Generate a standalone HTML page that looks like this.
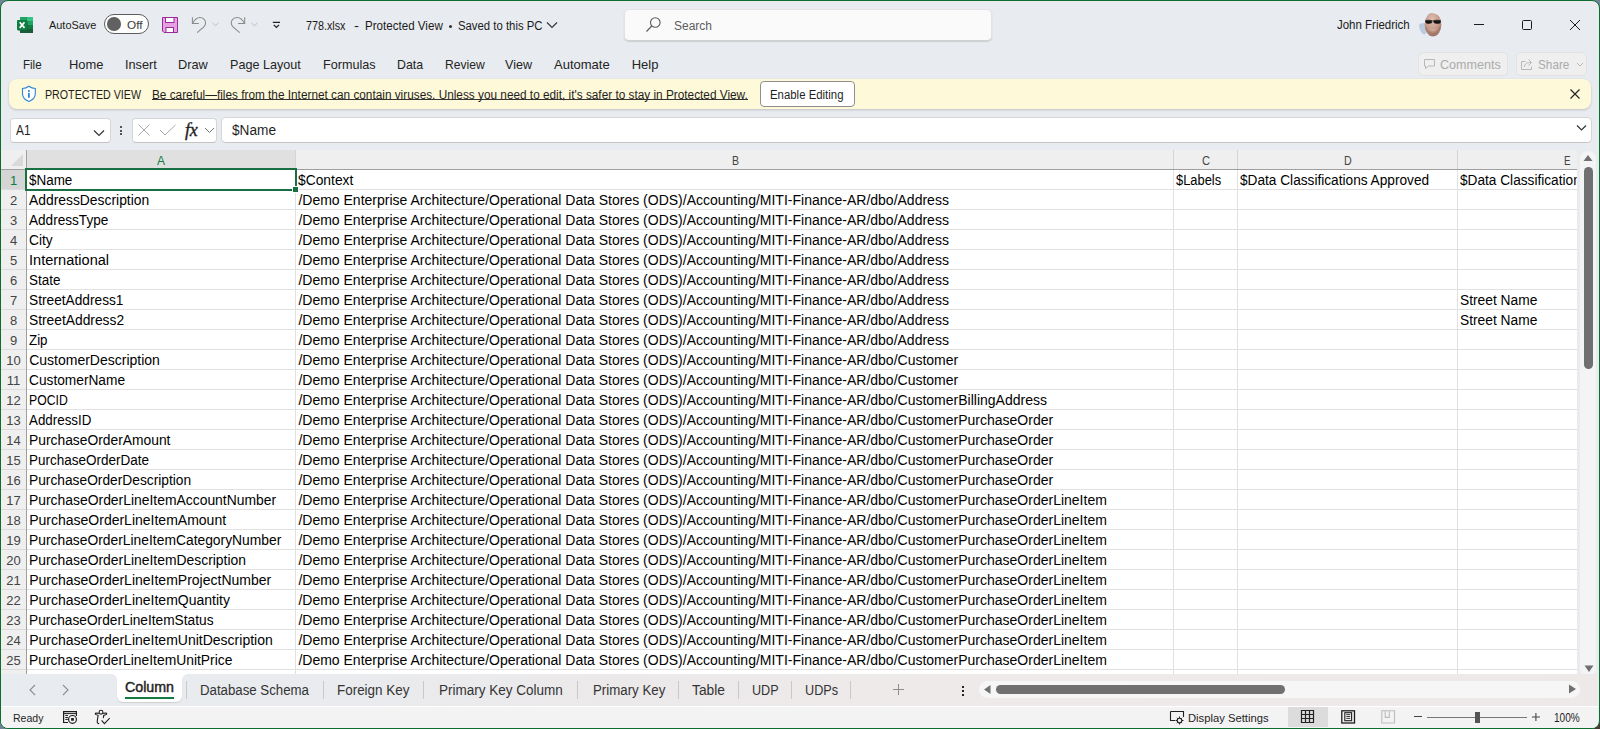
<!DOCTYPE html>
<html><head><meta charset="utf-8"><style>
html,body{margin:0;padding:0;}
body{width:1600px;height:729px;overflow:hidden;position:relative;background:#6f8296;font-family:"Liberation Sans",sans-serif;}
#win{position:absolute;left:0;top:0;width:1598px;height:727px;border:1px solid #0b6e2f;border-radius:8px;background:#e8ebef;overflow:hidden;}
#in{position:absolute;left:-1px;top:-1px;width:1600px;height:729px;}
.t{position:absolute;white-space:nowrap;line-height:1;font-family:"Liberation Sans",sans-serif;}
.c{position:absolute;white-space:nowrap;font-size:14px;line-height:14px;color:#000;}
.rn{position:absolute;left:1px;width:25px;text-align:center;font-size:13px;line-height:13px;}
svg{overflow:visible}
</style></head><body><div style="position:absolute;left:1588px;top:717px;width:12px;height:12px;background:#4a3833"></div><div id="win"><div id="in">
<svg style="position:absolute;left:17px;top:17px;" width="16" height="16" viewBox="0 0 16 16">
<rect x="3" y="0" width="13" height="16" rx="0.8" fill="#185c37"/>
<rect x="3" y="0" width="6.7" height="4" fill="#21a366"/>
<rect x="9.7" y="0" width="6.3" height="4" fill="#33c481"/>
<rect x="3" y="4" width="13" height="4" fill="#21a366"/>
<rect x="3" y="8" width="13" height="4" fill="#107c41"/>
<rect x="3" y="12" width="13" height="4" rx="0.6" fill="#185c37"/>
<rect x="1" y="4" width="10" height="10" rx="1" fill="#0b5a2e" opacity="0.5"/>
<rect x="0" y="3" width="10.3" height="10.2" rx="1" fill="#107c41"/>
<path d="M2.7 5.3 L7.5 10.9 M7.5 5.3 L2.7 10.9" stroke="#fff" stroke-width="1.7"/>
</svg>
<div class="t" style="left:49.00px;top:20px;font-size:11px;color:#1b1b1b;transform:scaleX(0.9919);transform-origin:0 0;">AutoSave</div>
<div style="position:absolute;left:104px;top:14px;width:43px;height:18px;border:1px solid #5c5c5c;border-radius:10px;background:#fdfdfd;"></div>
<div style="position:absolute;left:107px;top:17px;width:13.5px;height:13.5px;border-radius:50%;background:#616161;"></div>
<div class="t" style="left:127.00px;top:20px;font-size:11px;color:#3a3a3a;transform:scaleX(1.0675);transform-origin:0 0;">Off</div>
<svg style="position:absolute;left:162px;top:17px;" width="16" height="16" viewBox="0 0 16 16">
<path d="M0.5 0.5 H15.5 V15.5 H2 L0.5 14 Z" fill="#e6a1e0" stroke="#9b2a9b" stroke-width="1"/>
<rect x="3.5" y="0.5" width="8.5" height="5" fill="#fff" stroke="#9b2a9b" stroke-width="1"/>
<rect x="4" y="10.5" width="7.5" height="5" fill="#fff" stroke="#9b2a9b" stroke-width="1"/>
</svg>
<svg style="position:absolute;left:190px;top:16px;" width="30" height="18" viewBox="0 0 30 18">
<path d="M2.4 1.3 V7.4 H8.8" fill="none" stroke="#8a8a8a" stroke-width="1.05"/>
<path d="M2.7 7.2 C4.8 3 7.4 1.4 10 1.4 C13.2 1.4 15.6 3.9 15.6 6.9 C15.6 8.7 14.8 9.8 13.8 10.8 L7.2 16.6" fill="none" stroke="#8a8a8a" stroke-width="1.05"/>
<path d="M22.5 6.9 L25.5 9.7 L28.4 6.9" fill="none" stroke="#b8b8b8" stroke-width="0.9"/>
</svg>
<svg style="position:absolute;left:229px;top:16px;" width="30" height="18" viewBox="0 0 30 18">
<path d="M15.7 1.3 V7.4 H9.1" fill="none" stroke="#8a8a8a" stroke-width="1.05"/>
<path d="M15.4 7.2 C13.3 3 10.7 1.4 8.1 1.4 C4.9 1.4 2.2 3.9 2.2 6.9 C2.2 8.7 3 9.8 4 10.8 L10.7 16.6" fill="none" stroke="#8a8a8a" stroke-width="1.05"/>
<path d="M22.6 6.9 L25.5 9.7 L28.5 6.9" fill="none" stroke="#b8b8b8" stroke-width="0.9"/>
</svg>
<svg style="position:absolute;left:271px;top:20px;" width="11" height="10" viewBox="0 0 11 10">
<path d="M1.8 2.3 H9" stroke="#222" stroke-width="1.3"/>
<path d="M2.8 4.9 L5.4 7.4 L8 4.9" fill="none" stroke="#222" stroke-width="1.3"/>
</svg>
<div class="t" style="left:306.40px;top:20px;font-size:12px;color:#1b1b1b;transform:scaleX(0.8969);transform-origin:0 0;">778.xlsx</div>
<div class="t" style="left:354.00px;top:20px;font-size:12px;color:#1b1b1b;transform:scaleX(1.2438);transform-origin:0 0;">-</div>
<div class="t" style="left:364.70px;top:20px;font-size:12px;color:#1b1b1b;transform:scaleX(0.9662);transform-origin:0 0;">Protected View</div>
<div style="position:absolute;left:449px;top:25px;width:3px;height:3px;border-radius:50%;background:#333;"></div>
<div class="t" style="left:458.00px;top:20px;font-size:12px;color:#1b1b1b;transform:scaleX(0.9452);transform-origin:0 0;">Saved to this PC</div>
<svg style="position:absolute;left:546px;top:21px;" width="12" height="8" viewBox="0 0 12 8"><path d="M1 1.5 L6 6.5 L11 1.5" fill="none" stroke="#333" stroke-width="1.1"/></svg>
<div style="position:absolute;left:624px;top:9px;width:366px;height:30px;background:#fafafa;border:1px solid #e2e2e2;border-bottom-color:#d0d0d0;border-radius:5px;box-shadow:0 1px 1.5px rgba(0,0,0,0.13);"></div>
<svg style="position:absolute;left:645px;top:16px;" width="17" height="17" viewBox="0 0 17 17"><circle cx="10.3" cy="6.5" r="4.8" fill="none" stroke="#5a5a5a" stroke-width="1.1"/><path d="M6.8 10 L1.5 15.5" stroke="#5a5a5a" stroke-width="1.1"/></svg>
<div class="t" style="left:674.00px;top:20px;font-size:12px;color:#5d5d5d;">Search</div>
<div class="t" style="left:1337.00px;top:19px;font-size:12px;color:#1b1b1b;transform:scaleX(0.9563);transform-origin:0 0;">John Friedrich</div>
<svg style="position:absolute;left:1419px;top:13px;" width="24" height="24" viewBox="0 0 24 24">
<defs><clipPath id="av"><circle cx="12" cy="12" r="12"/></clipPath>
<radialGradient id="fg" cx="0.45" cy="0.3" r="0.75"><stop offset="0" stop-color="#e0c0b2"/><stop offset="0.6" stop-color="#c39886"/><stop offset="1" stop-color="#93695a"/></radialGradient></defs>
<g clip-path="url(#av)">
<rect width="24" height="24" fill="#e6edf4"/>
<ellipse cx="3.5" cy="16" rx="5" ry="6" fill="#b9cbe0"/>
<ellipse cx="14" cy="11.5" rx="8.4" ry="12" fill="url(#fg)"/>
<path d="M6.5 7.6 Q9.5 6.8 12.6 7.5 L12.8 9.8 Q10 11 7 9.9 Z M14.8 7.5 Q18 6.8 21.5 7.6 L21.2 9.9 Q18 11 15 9.8 Z M12.4 8 H15" fill="#161616" stroke="#161616" stroke-width="0.6"/>
<path d="M10 16.3 Q14 18.2 18 16.2 Q14 17.4 10 16.3 Z" fill="#f0e0d6"/>
<path d="M7 14 Q8 19 14 21 Q20 19 21 14" fill="none" stroke="#8a6050" stroke-width="0.8" opacity="0.6"/>
</g></svg>
<svg style="position:absolute;left:1473px;top:18px;" width="12" height="12" viewBox="0 0 12 12"><path d="M1 6.5 H11" stroke="#1b1b1b" stroke-width="1"/></svg>
<svg style="position:absolute;left:1521px;top:19px;" width="12" height="12" viewBox="0 0 12 12"><rect x="1.5" y="1.5" width="9" height="9" rx="1" fill="none" stroke="#1b1b1b" stroke-width="1"/></svg>
<svg style="position:absolute;left:1569px;top:19px;" width="12" height="12" viewBox="0 0 12 12"><path d="M1 1 L11 11 M11 1 L1 11" stroke="#1b1b1b" stroke-width="1"/></svg>
<div class="t" style="left:23.00px;top:58px;font-size:13px;color:#242424;transform:scaleX(0.8887);transform-origin:0 0;">File</div>
<div class="t" style="left:69.00px;top:58px;font-size:13px;color:#242424;transform:scaleX(0.9939);transform-origin:0 0;">Home</div>
<div class="t" style="left:125.00px;top:58px;font-size:13px;color:#242424;transform:scaleX(0.9785);transform-origin:0 0;">Insert</div>
<div class="t" style="left:178.00px;top:58px;font-size:13px;color:#242424;transform:scaleX(0.9817);transform-origin:0 0;">Draw</div>
<div class="t" style="left:230.00px;top:58px;font-size:13px;color:#242424;transform:scaleX(0.9686);transform-origin:0 0;">Page Layout</div>
<div class="t" style="left:323.00px;top:58px;font-size:13px;color:#242424;transform:scaleX(0.9721);transform-origin:0 0;">Formulas</div>
<div class="t" style="left:397.40px;top:58px;font-size:13px;color:#242424;transform:scaleX(0.9493);transform-origin:0 0;">Data</div>
<div class="t" style="left:445.00px;top:58px;font-size:13px;color:#242424;transform:scaleX(0.9311);transform-origin:0 0;">Review</div>
<div class="t" style="left:505.00px;top:58px;font-size:13px;color:#242424;transform:scaleX(0.9660);transform-origin:0 0;">View</div>
<div class="t" style="left:554.00px;top:58px;font-size:13px;color:#242424;">Automate</div>
<div class="t" style="left:631.70px;top:58px;font-size:13px;color:#242424;">Help</div>
<div style="position:absolute;left:1418px;top:52px;width:88px;height:22px;border:1px solid #e2e2e2;border-radius:5px;background:#efefef;"></div>
<svg style="position:absolute;left:1423px;top:58px;" width="13" height="12" viewBox="0 0 13 12"><path d="M1.5 1.5 H11.5 V8 H5.5 L2.5 10.5 V8 H1.5 Z" fill="none" stroke="#b8b8b8" stroke-width="1"/></svg>
<div class="t" style="left:1439.70px;top:58px;font-size:13px;color:#ababab;transform:scaleX(0.9673);transform-origin:0 0;">Comments</div>
<div style="position:absolute;left:1516px;top:52px;width:69px;height:22px;border:1px solid #e2e2e2;border-radius:5px;background:#efefef;"></div>
<svg style="position:absolute;left:1520px;top:57px;" width="14" height="14" viewBox="0 0 14 14"><path d="M5.5 4.5 H1.5 V12.5 H11.5 V9.5" fill="none" stroke="#b8b8b8" stroke-width="1"/><path d="M4.5 10 C4.5 6.5 7 5.5 11 5.5 M8.5 2.5 L11.5 5.5 L8.5 8.5" fill="none" stroke="#b8b8b8" stroke-width="1"/></svg>
<div class="t" style="left:1537.70px;top:58px;font-size:13px;color:#ababab;transform:scaleX(0.9046);transform-origin:0 0;">Share</div>
<svg style="position:absolute;left:1576px;top:62px;" width="8" height="6" viewBox="0 0 8 6"><path d="M1 1 L4 4 L7 1" fill="none" stroke="#b8b8b8" stroke-width="1"/></svg>
<div style="position:absolute;left:9px;top:79px;width:1582px;height:30px;background:#fef9d8;border-radius:8px;box-shadow:0 1px 2.5px rgba(0,0,0,0.18);"></div>
<svg style="position:absolute;left:21px;top:85px;" width="16" height="18" viewBox="0 0 16 18">
<path d="M7.9 1.3 C9.8 2.7 12 3.4 14.3 3.5 V8.8 C14.3 12.5 11.8 14.9 7.9 16.5 C4 14.9 1.5 12.5 1.5 8.8 V3.5 C3.8 3.4 6 2.7 7.9 1.3 Z" fill="#fff" stroke="#3387d6" stroke-width="1.15"/>
<circle cx="7.9" cy="6" r="1.05" fill="#2a7fd0"/>
<rect x="7.05" y="7.9" width="1.7" height="4.9" fill="#2a7fd0"/></svg>
<div class="t" style="left:45.30px;top:89px;font-size:12px;color:#1f1f1f;transform:scaleX(0.8889);transform-origin:0 0;">PROTECTED VIEW</div>
<div class="t" style="left:152.30px;top:89px;font-size:12px;color:#1f1f1f;transform:scaleX(0.9835);transform-origin:0 0;">Be careful—files from the Internet can contain viruses. Unless you need to edit, it's safer to stay in Protected View.</div>
<div style="position:absolute;left:152px;top:99px;width:596px;height:1px;background:#333;"></div>
<div style="position:absolute;left:760px;top:81px;width:93px;height:24px;background:#fff;border:1px solid #8f8f8f;border-radius:4px;"></div>
<div class="t" style="left:769.50px;top:89px;font-size:12px;color:#1f1f1f;transform:scaleX(0.9496);transform-origin:0 0;">Enable Editing</div>
<svg style="position:absolute;left:1569px;top:88px;" width="12" height="12" viewBox="0 0 12 12"><path d="M1.5 1.5 L10.5 10.5 M10.5 1.5 L1.5 10.5" stroke="#242424" stroke-width="1.2"/></svg>
<div style="position:absolute;left:10px;top:118px;width:99px;height:23px;background:#fff;border:1px solid #d6d6d6;border-bottom-color:#c4c4c4;border-radius:4px;"></div>
<div class="t" style="left:16.00px;top:123px;font-size:14px;color:#1f1f1f;transform:scaleX(0.8455);transform-origin:0 0;">A1</div>
<svg style="position:absolute;left:93px;top:129px;" width="12" height="8" viewBox="0 0 12 8"><path d="M1 1.5 L6 6.5 L11 1.5" fill="none" stroke="#333" stroke-width="1.2"/></svg>
<div style="position:absolute;left:120px;top:126px;width:2px;height:2px;background:#222;border-radius:1px;"></div>
<div style="position:absolute;left:120px;top:129.5px;width:2px;height:2px;background:#222;border-radius:1px;"></div>
<div style="position:absolute;left:120px;top:133px;width:2px;height:2px;background:#222;border-radius:1px;"></div>
<div style="position:absolute;left:132px;top:118px;width:83px;height:23px;background:#fff;border:1px solid #d6d6d6;border-bottom-color:#c4c4c4;border-radius:4px;"></div>
<svg style="position:absolute;left:137px;top:123px;" width="14" height="14" viewBox="0 0 14 14"><path d="M1.5 1.5 L12.5 12.5 M12.5 1.5 L1.5 12.5" stroke="#a8a8a8" stroke-width="1"/></svg>
<svg style="position:absolute;left:159px;top:124px;" width="18" height="12" viewBox="0 0 18 12"><path d="M1 6 L6 11 L16.5 1" fill="none" stroke="#a8a8a8" stroke-width="1"/></svg>
<div style="position:absolute;left:185px;top:121px;font-family:'Liberation Serif',serif;font-style:italic;font-size:18px;line-height:18px;color:#222;white-space:nowrap;letter-spacing:-0.3px;-webkit-text-stroke:0.35px #222">fx</div>
<svg style="position:absolute;left:204px;top:127px;" width="11" height="7" viewBox="0 0 11 7"><path d="M1 1 L5.5 5.5 L10 1" fill="none" stroke="#777" stroke-width="1"/></svg>
<div style="position:absolute;left:221px;top:117px;width:1369px;height:24px;background:#fff;border:1px solid #d6d6d6;border-bottom-color:#c4c4c4;border-radius:5px;"></div>
<div class="t" style="left:232.00px;top:123px;font-size:14px;color:#1f1f1f;transform:scaleX(0.9745);transform-origin:0 0;">$Name</div>
<svg style="position:absolute;left:1576px;top:124px;" width="11" height="8" viewBox="0 0 11 8"><path d="M1 1.5 L5.5 6 L10 1.5" fill="none" stroke="#333" stroke-width="1.2"/></svg>
<div style="position:absolute;left:1px;top:150px;width:1576px;height:524px;background:#fff;"></div>
<div style="position:absolute;left:1px;top:150px;width:1577px;height:19px;background:#efefef;"></div>
<div style="position:absolute;left:27px;top:150px;width:268px;height:19px;background:#e0e0e0;"></div>
<div style="position:absolute;left:1px;top:169px;width:1577px;height:1px;background:#9f9f9f;"></div>
<div style="position:absolute;left:1px;top:170px;width:25px;height:504px;background:#efefef;"></div>
<div style="position:absolute;left:1px;top:170px;width:25px;height:19px;background:#d5d5d5;"></div>
<div style="position:absolute;left:26px;top:150px;width:1px;height:524px;background:#9f9f9f;"></div>
<svg style="position:absolute;left:10px;top:153px;" width="14" height="14" viewBox="0 0 14 14"><path d="M13 1 V13 H1 Z" fill="#d9d9d9"/></svg>
<div style="position:absolute;left:295px;top:150px;width:1px;height:19px;background:#d4d4d4;"></div>
<div style="position:absolute;left:1173px;top:150px;width:1px;height:19px;background:#d4d4d4;"></div>
<div style="position:absolute;left:1237px;top:150px;width:1px;height:19px;background:#d4d4d4;"></div>
<div style="position:absolute;left:1457px;top:150px;width:1px;height:19px;background:#d4d4d4;"></div>
<div style="position:absolute;left:295px;top:170px;width:1px;height:504px;background:#e1e1e1;"></div>
<div style="position:absolute;left:1173px;top:170px;width:1px;height:504px;background:#e1e1e1;"></div>
<div style="position:absolute;left:1237px;top:170px;width:1px;height:504px;background:#e1e1e1;"></div>
<div style="position:absolute;left:1457px;top:170px;width:1px;height:504px;background:#e1e1e1;"></div>
<div style="position:absolute;left:27px;top:189px;width:1551px;height:1px;background:#e1e1e1;"></div>
<div style="position:absolute;left:1px;top:189px;width:25px;height:1px;background:#dcdcdc;"></div>
<div style="position:absolute;left:27px;top:209px;width:1551px;height:1px;background:#e1e1e1;"></div>
<div style="position:absolute;left:1px;top:209px;width:25px;height:1px;background:#dcdcdc;"></div>
<div style="position:absolute;left:27px;top:229px;width:1551px;height:1px;background:#e1e1e1;"></div>
<div style="position:absolute;left:1px;top:229px;width:25px;height:1px;background:#dcdcdc;"></div>
<div style="position:absolute;left:27px;top:249px;width:1551px;height:1px;background:#e1e1e1;"></div>
<div style="position:absolute;left:1px;top:249px;width:25px;height:1px;background:#dcdcdc;"></div>
<div style="position:absolute;left:27px;top:269px;width:1551px;height:1px;background:#e1e1e1;"></div>
<div style="position:absolute;left:1px;top:269px;width:25px;height:1px;background:#dcdcdc;"></div>
<div style="position:absolute;left:27px;top:289px;width:1551px;height:1px;background:#e1e1e1;"></div>
<div style="position:absolute;left:1px;top:289px;width:25px;height:1px;background:#dcdcdc;"></div>
<div style="position:absolute;left:27px;top:309px;width:1551px;height:1px;background:#e1e1e1;"></div>
<div style="position:absolute;left:1px;top:309px;width:25px;height:1px;background:#dcdcdc;"></div>
<div style="position:absolute;left:27px;top:329px;width:1551px;height:1px;background:#e1e1e1;"></div>
<div style="position:absolute;left:1px;top:329px;width:25px;height:1px;background:#dcdcdc;"></div>
<div style="position:absolute;left:27px;top:349px;width:1551px;height:1px;background:#e1e1e1;"></div>
<div style="position:absolute;left:1px;top:349px;width:25px;height:1px;background:#dcdcdc;"></div>
<div style="position:absolute;left:27px;top:369px;width:1551px;height:1px;background:#e1e1e1;"></div>
<div style="position:absolute;left:1px;top:369px;width:25px;height:1px;background:#dcdcdc;"></div>
<div style="position:absolute;left:27px;top:389px;width:1551px;height:1px;background:#e1e1e1;"></div>
<div style="position:absolute;left:1px;top:389px;width:25px;height:1px;background:#dcdcdc;"></div>
<div style="position:absolute;left:27px;top:409px;width:1551px;height:1px;background:#e1e1e1;"></div>
<div style="position:absolute;left:1px;top:409px;width:25px;height:1px;background:#dcdcdc;"></div>
<div style="position:absolute;left:27px;top:429px;width:1551px;height:1px;background:#e1e1e1;"></div>
<div style="position:absolute;left:1px;top:429px;width:25px;height:1px;background:#dcdcdc;"></div>
<div style="position:absolute;left:27px;top:449px;width:1551px;height:1px;background:#e1e1e1;"></div>
<div style="position:absolute;left:1px;top:449px;width:25px;height:1px;background:#dcdcdc;"></div>
<div style="position:absolute;left:27px;top:469px;width:1551px;height:1px;background:#e1e1e1;"></div>
<div style="position:absolute;left:1px;top:469px;width:25px;height:1px;background:#dcdcdc;"></div>
<div style="position:absolute;left:27px;top:489px;width:1551px;height:1px;background:#e1e1e1;"></div>
<div style="position:absolute;left:1px;top:489px;width:25px;height:1px;background:#dcdcdc;"></div>
<div style="position:absolute;left:27px;top:509px;width:1551px;height:1px;background:#e1e1e1;"></div>
<div style="position:absolute;left:1px;top:509px;width:25px;height:1px;background:#dcdcdc;"></div>
<div style="position:absolute;left:27px;top:529px;width:1551px;height:1px;background:#e1e1e1;"></div>
<div style="position:absolute;left:1px;top:529px;width:25px;height:1px;background:#dcdcdc;"></div>
<div style="position:absolute;left:27px;top:549px;width:1551px;height:1px;background:#e1e1e1;"></div>
<div style="position:absolute;left:1px;top:549px;width:25px;height:1px;background:#dcdcdc;"></div>
<div style="position:absolute;left:27px;top:569px;width:1551px;height:1px;background:#e1e1e1;"></div>
<div style="position:absolute;left:1px;top:569px;width:25px;height:1px;background:#dcdcdc;"></div>
<div style="position:absolute;left:27px;top:589px;width:1551px;height:1px;background:#e1e1e1;"></div>
<div style="position:absolute;left:1px;top:589px;width:25px;height:1px;background:#dcdcdc;"></div>
<div style="position:absolute;left:27px;top:609px;width:1551px;height:1px;background:#e1e1e1;"></div>
<div style="position:absolute;left:1px;top:609px;width:25px;height:1px;background:#dcdcdc;"></div>
<div style="position:absolute;left:27px;top:629px;width:1551px;height:1px;background:#e1e1e1;"></div>
<div style="position:absolute;left:1px;top:629px;width:25px;height:1px;background:#dcdcdc;"></div>
<div style="position:absolute;left:27px;top:649px;width:1551px;height:1px;background:#e1e1e1;"></div>
<div style="position:absolute;left:1px;top:649px;width:25px;height:1px;background:#dcdcdc;"></div>
<div style="position:absolute;left:27px;top:669px;width:1551px;height:1px;background:#e1e1e1;"></div>
<div style="position:absolute;left:1px;top:669px;width:25px;height:1px;background:#dcdcdc;"></div>
<div class="t" style="left:157.00px;top:154px;font-size:13px;color:#107c41;transform:scaleX(0.9185);transform-origin:0 0;">A</div>
<div class="t" style="left:732.00px;top:154px;font-size:13px;color:#444;transform:scaleX(0.8097);transform-origin:0 0;">B</div>
<div class="t" style="left:1202.00px;top:154px;font-size:13px;color:#444;transform:scaleX(0.8547);transform-origin:0 0;">C</div>
<div class="t" style="left:1344.00px;top:154px;font-size:13px;color:#444;transform:scaleX(0.8226);transform-origin:0 0;">D</div>
<div class="t" style="left:1564.00px;top:154px;font-size:13px;color:#444;transform:scaleX(0.7519);transform-origin:0 0;">E</div>
<div class="rn" style="top:174px;color:#107c41">1</div>
<div class="t" style="left:29.20px;top:173px;font-size:14px;color:#000;transform:scaleX(0.9590);transform-origin:0 0;">$Name</div>
<div class="t" style="left:298.40px;top:173px;font-size:14px;color:#000;transform:scaleX(0.9872);transform-origin:0 0;">$Context</div>
<div class="rn" style="top:194px;color:#444">2</div>
<div class="t" style="left:29.20px;top:193px;font-size:14px;color:#000;transform:scaleX(0.9903);transform-origin:0 0;">AddressDescription</div>
<div class="t" style="left:298.40px;top:193px;font-size:14px;color:#000;">/Demo Enterprise Architecture/Operational Data Stores (ODS)/Accounting/MITI-Finance-AR/dbo/Address</div>
<div class="rn" style="top:214px;color:#444">3</div>
<div class="t" style="left:29.20px;top:213px;font-size:14px;color:#000;transform:scaleX(0.9707);transform-origin:0 0;">AddressType</div>
<div class="t" style="left:298.40px;top:213px;font-size:14px;color:#000;">/Demo Enterprise Architecture/Operational Data Stores (ODS)/Accounting/MITI-Finance-AR/dbo/Address</div>
<div class="rn" style="top:234px;color:#444">4</div>
<div class="t" style="left:29.20px;top:233px;font-size:14px;color:#000;transform:scaleX(0.9801);transform-origin:0 0;">City</div>
<div class="t" style="left:298.40px;top:233px;font-size:14px;color:#000;">/Demo Enterprise Architecture/Operational Data Stores (ODS)/Accounting/MITI-Finance-AR/dbo/Address</div>
<div class="rn" style="top:254px;color:#444">5</div>
<div class="t" style="left:29.20px;top:253px;font-size:14px;color:#000;transform:scaleX(1.0393);transform-origin:0 0;">International</div>
<div class="t" style="left:298.40px;top:253px;font-size:14px;color:#000;">/Demo Enterprise Architecture/Operational Data Stores (ODS)/Accounting/MITI-Finance-AR/dbo/Address</div>
<div class="rn" style="top:274px;color:#444">6</div>
<div class="t" style="left:29.20px;top:273px;font-size:14px;color:#000;transform:scaleX(0.9605);transform-origin:0 0;">State</div>
<div class="t" style="left:298.40px;top:273px;font-size:14px;color:#000;">/Demo Enterprise Architecture/Operational Data Stores (ODS)/Accounting/MITI-Finance-AR/dbo/Address</div>
<div class="rn" style="top:294px;color:#444">7</div>
<div class="t" style="left:29.20px;top:293px;font-size:14px;color:#000;transform:scaleX(0.9790);transform-origin:0 0;">StreetAddress1</div>
<div class="t" style="left:298.40px;top:293px;font-size:14px;color:#000;">/Demo Enterprise Architecture/Operational Data Stores (ODS)/Accounting/MITI-Finance-AR/dbo/Address</div>
<div class="rn" style="top:314px;color:#444">8</div>
<div class="t" style="left:29.20px;top:313px;font-size:14px;color:#000;transform:scaleX(0.9852);transform-origin:0 0;">StreetAddress2</div>
<div class="t" style="left:298.40px;top:313px;font-size:14px;color:#000;">/Demo Enterprise Architecture/Operational Data Stores (ODS)/Accounting/MITI-Finance-AR/dbo/Address</div>
<div class="rn" style="top:334px;color:#444">9</div>
<div class="t" style="left:29.20px;top:333px;font-size:14px;color:#000;transform:scaleX(0.9507);transform-origin:0 0;">Zip</div>
<div class="t" style="left:298.40px;top:333px;font-size:14px;color:#000;">/Demo Enterprise Architecture/Operational Data Stores (ODS)/Accounting/MITI-Finance-AR/dbo/Address</div>
<div class="rn" style="top:354px;color:#444">10</div>
<div class="t" style="left:29.20px;top:353px;font-size:14px;color:#000;">CustomerDescription</div>
<div class="t" style="left:298.40px;top:353px;font-size:14px;color:#000;">/Demo Enterprise Architecture/Operational Data Stores (ODS)/Accounting/MITI-Finance-AR/dbo/Customer</div>
<div class="rn" style="top:374px;color:#444">11</div>
<div class="t" style="left:29.20px;top:373px;font-size:14px;color:#000;transform:scaleX(0.9796);transform-origin:0 0;">CustomerName</div>
<div class="t" style="left:298.40px;top:373px;font-size:14px;color:#000;">/Demo Enterprise Architecture/Operational Data Stores (ODS)/Accounting/MITI-Finance-AR/dbo/Customer</div>
<div class="rn" style="top:394px;color:#444">12</div>
<div class="t" style="left:29.20px;top:393px;font-size:14px;color:#000;transform:scaleX(0.8734);transform-origin:0 0;">POCID</div>
<div class="t" style="left:298.40px;top:393px;font-size:14px;color:#000;">/Demo Enterprise Architecture/Operational Data Stores (ODS)/Accounting/MITI-Finance-AR/dbo/CustomerBillingAddress</div>
<div class="rn" style="top:414px;color:#444">13</div>
<div class="t" style="left:29.20px;top:413px;font-size:14px;color:#000;transform:scaleX(0.9544);transform-origin:0 0;">AddressID</div>
<div class="t" style="left:298.40px;top:413px;font-size:14px;color:#000;">/Demo Enterprise Architecture/Operational Data Stores (ODS)/Accounting/MITI-Finance-AR/dbo/CustomerPurchaseOrder</div>
<div class="rn" style="top:434px;color:#444">14</div>
<div class="t" style="left:29.20px;top:433px;font-size:14px;color:#000;transform:scaleX(0.9878);transform-origin:0 0;">PurchaseOrderAmount</div>
<div class="t" style="left:298.40px;top:433px;font-size:14px;color:#000;">/Demo Enterprise Architecture/Operational Data Stores (ODS)/Accounting/MITI-Finance-AR/dbo/CustomerPurchaseOrder</div>
<div class="rn" style="top:454px;color:#444">15</div>
<div class="t" style="left:29.20px;top:453px;font-size:14px;color:#000;transform:scaleX(0.9644);transform-origin:0 0;">PurchaseOrderDate</div>
<div class="t" style="left:298.40px;top:453px;font-size:14px;color:#000;">/Demo Enterprise Architecture/Operational Data Stores (ODS)/Accounting/MITI-Finance-AR/dbo/CustomerPurchaseOrder</div>
<div class="rn" style="top:474px;color:#444">16</div>
<div class="t" style="left:29.20px;top:473px;font-size:14px;color:#000;transform:scaleX(0.9831);transform-origin:0 0;">PurchaseOrderDescription</div>
<div class="t" style="left:298.40px;top:473px;font-size:14px;color:#000;">/Demo Enterprise Architecture/Operational Data Stores (ODS)/Accounting/MITI-Finance-AR/dbo/CustomerPurchaseOrder</div>
<div class="rn" style="top:494px;color:#444">17</div>
<div class="t" style="left:29.20px;top:493px;font-size:14px;color:#000;transform:scaleX(0.9924);transform-origin:0 0;">PurchaseOrderLineItemAccountNumber</div>
<div class="t" style="left:298.40px;top:493px;font-size:14px;color:#000;">/Demo Enterprise Architecture/Operational Data Stores (ODS)/Accounting/MITI-Finance-AR/dbo/CustomerPurchaseOrderLineItem</div>
<div class="rn" style="top:514px;color:#444">18</div>
<div class="t" style="left:29.20px;top:513px;font-size:14px;color:#000;">PurchaseOrderLineItemAmount</div>
<div class="t" style="left:298.40px;top:513px;font-size:14px;color:#000;">/Demo Enterprise Architecture/Operational Data Stores (ODS)/Accounting/MITI-Finance-AR/dbo/CustomerPurchaseOrderLineItem</div>
<div class="rn" style="top:534px;color:#444">19</div>
<div class="t" style="left:29.20px;top:533px;font-size:14px;color:#000;transform:scaleX(0.9886);transform-origin:0 0;">PurchaseOrderLineItemCategoryNumber</div>
<div class="t" style="left:298.40px;top:533px;font-size:14px;color:#000;">/Demo Enterprise Architecture/Operational Data Stores (ODS)/Accounting/MITI-Finance-AR/dbo/CustomerPurchaseOrderLineItem</div>
<div class="rn" style="top:554px;color:#444">20</div>
<div class="t" style="left:29.20px;top:553px;font-size:14px;color:#000;transform:scaleX(0.9923);transform-origin:0 0;">PurchaseOrderLineItemDescription</div>
<div class="t" style="left:298.40px;top:553px;font-size:14px;color:#000;">/Demo Enterprise Architecture/Operational Data Stores (ODS)/Accounting/MITI-Finance-AR/dbo/CustomerPurchaseOrderLineItem</div>
<div class="rn" style="top:574px;color:#444">21</div>
<div class="t" style="left:29.20px;top:573px;font-size:14px;color:#000;">PurchaseOrderLineItemProjectNumber</div>
<div class="t" style="left:298.40px;top:573px;font-size:14px;color:#000;">/Demo Enterprise Architecture/Operational Data Stores (ODS)/Accounting/MITI-Finance-AR/dbo/CustomerPurchaseOrderLineItem</div>
<div class="rn" style="top:594px;color:#444">22</div>
<div class="t" style="left:29.20px;top:593px;font-size:14px;color:#000;">PurchaseOrderLineItemQuantity</div>
<div class="t" style="left:298.40px;top:593px;font-size:14px;color:#000;">/Demo Enterprise Architecture/Operational Data Stores (ODS)/Accounting/MITI-Finance-AR/dbo/CustomerPurchaseOrderLineItem</div>
<div class="rn" style="top:614px;color:#444">23</div>
<div class="t" style="left:29.20px;top:613px;font-size:14px;color:#000;transform:scaleX(0.9798);transform-origin:0 0;">PurchaseOrderLineItemStatus</div>
<div class="t" style="left:298.40px;top:613px;font-size:14px;color:#000;">/Demo Enterprise Architecture/Operational Data Stores (ODS)/Accounting/MITI-Finance-AR/dbo/CustomerPurchaseOrderLineItem</div>
<div class="rn" style="top:634px;color:#444">24</div>
<div class="t" style="left:29.20px;top:633px;font-size:14px;color:#000;">PurchaseOrderLineItemUnitDescription</div>
<div class="t" style="left:298.40px;top:633px;font-size:14px;color:#000;">/Demo Enterprise Architecture/Operational Data Stores (ODS)/Accounting/MITI-Finance-AR/dbo/CustomerPurchaseOrderLineItem</div>
<div class="rn" style="top:654px;color:#444">25</div>
<div class="t" style="left:29.20px;top:653px;font-size:14px;color:#000;transform:scaleX(0.9905);transform-origin:0 0;">PurchaseOrderLineItemUnitPrice</div>
<div class="t" style="left:298.40px;top:653px;font-size:14px;color:#000;">/Demo Enterprise Architecture/Operational Data Stores (ODS)/Accounting/MITI-Finance-AR/dbo/CustomerPurchaseOrderLineItem</div>
<div class="t" style="left:1176.40px;top:173px;font-size:14px;color:#000;transform:scaleX(0.9211);transform-origin:0 0;">$Labels</div>
<div class="t" style="left:1240.40px;top:173px;font-size:14px;color:#000;transform:scaleX(0.9759);transform-origin:0 0;">$Data Classifications Approved</div>
<div style="position:absolute;left:1458px;top:170px;width:119px;height:19px;overflow:hidden">
<div class="t" style="left:1.80px;top:3px;font-size:14px;color:#000;transform:scaleX(0.9759);transform-origin:0 0;">$Data Classifications Approved</div>
</div>
<div class="t" style="left:1459.80px;top:293px;font-size:14px;color:#000;transform:scaleX(0.9846);transform-origin:0 0;">Street Name</div>
<div class="t" style="left:1459.80px;top:313px;font-size:14px;color:#000;transform:scaleX(0.9846);transform-origin:0 0;">Street Name</div>
<div style="position:absolute;left:25px;top:168px;width:268px;height:19px;border:2px solid #187042;"></div>
<div style="position:absolute;left:292px;top:186px;width:7px;height:7px;background:#187042;border:1px solid #fff;box-sizing:border-box;"></div>
<div style="position:absolute;left:1577px;top:150px;width:21px;height:524px;background:#e8ebef;"></div>
<div style="position:absolute;left:1580px;top:151px;width:16px;height:526px;background:#f4f4f4;border-radius:8px;"></div>
<svg style="position:absolute;left:1582px;top:154px;" width="12" height="8" viewBox="0 0 12 8"><path d="M6 1 L10.5 7 H1.5 Z" fill="#707070"/></svg>
<div style="position:absolute;left:1584px;top:167px;width:9px;height:202px;background:#707070;border-radius:5px;"></div>
<svg style="position:absolute;left:1583px;top:664px;" width="12" height="9" viewBox="0 0 12 9"><path d="M6 8 L10.5 1.5 H1.5 Z" fill="#707070"/></svg>
<div style="position:absolute;left:1px;top:674px;width:1597px;height:32px;background:linear-gradient(90deg,#e8ebef 0px,#e9ebee 330px,#ece9ea 600px,#eeeaea 1000px,#ede9e9 1600px);"></div>
<div style="position:absolute;left:117px;top:674px;width:65px;height:28px;background:#fff;border-radius:0 0 6px 6px;box-shadow:0 1px 1px rgba(0,0,0,0.12);"></div>
<div style="position:absolute;left:111px;top:674px;width:6px;height:6px;background:#fff;"></div>
<div style="position:absolute;left:105px;top:674px;width:12px;height:12px;background:#e8ebef;border-radius:6px;"></div>
<div style="position:absolute;left:182px;top:674px;width:6px;height:6px;background:#fff;"></div>
<div style="position:absolute;left:182px;top:674px;width:12px;height:12px;background:#e8ebef;border-radius:6px;"></div>
<svg style="position:absolute;left:27px;top:684px;" width="11" height="12" viewBox="0 0 11 12"><path d="M8 1 L3 6 L8 11" fill="none" stroke="#8e8e8e" stroke-width="1.1"/></svg>
<svg style="position:absolute;left:60px;top:684px;" width="11" height="12" viewBox="0 0 11 12"><path d="M3 1 L8 6 L3 11" fill="none" stroke="#8e8e8e" stroke-width="1.1"/></svg>
<div class="t" style="left:125.00px;top:680px;font-size:14px;color:#1f1f1f;transform:scaleX(1.0160);transform-origin:0 0;-webkit-text-stroke:0.45px #1f1f1f;">Column</div>
<div style="position:absolute;left:125px;top:697px;width:49px;height:2px;background:#107c41;"></div>
<div class="t" style="left:200.30px;top:683px;font-size:14px;color:#333;transform:scaleX(0.9460);transform-origin:0 0;">Database Schema</div>
<div class="t" style="left:337.40px;top:683px;font-size:14px;color:#333;transform:scaleX(0.9594);transform-origin:0 0;">Foreign Key</div>
<div class="t" style="left:438.50px;top:683px;font-size:14px;color:#333;transform:scaleX(0.9651);transform-origin:0 0;">Primary Key Column</div>
<div class="t" style="left:592.50px;top:683px;font-size:14px;color:#333;transform:scaleX(0.9484);transform-origin:0 0;">Primary Key</div>
<div class="t" style="left:692.40px;top:683px;font-size:14px;color:#333;transform:scaleX(0.9863);transform-origin:0 0;">Table</div>
<div class="t" style="left:752.30px;top:683px;font-size:14px;color:#333;transform:scaleX(0.9005);transform-origin:0 0;">UDP</div>
<div class="t" style="left:805.20px;top:683px;font-size:14px;color:#333;transform:scaleX(0.9031);transform-origin:0 0;">UDPs</div>
<div style="position:absolute;left:186px;top:681px;width:1px;height:18px;background:#c9c9c9;"></div>
<div style="position:absolute;left:323px;top:681px;width:1px;height:18px;background:#c9c9c9;"></div>
<div style="position:absolute;left:423px;top:681px;width:1px;height:18px;background:#c9c9c9;"></div>
<div style="position:absolute;left:577px;top:681px;width:1px;height:18px;background:#c9c9c9;"></div>
<div style="position:absolute;left:678px;top:681px;width:1px;height:18px;background:#c9c9c9;"></div>
<div style="position:absolute;left:738px;top:681px;width:1px;height:18px;background:#c9c9c9;"></div>
<div style="position:absolute;left:791px;top:681px;width:1px;height:18px;background:#c9c9c9;"></div>
<div style="position:absolute;left:850px;top:681px;width:1px;height:18px;background:#c9c9c9;"></div>
<svg style="position:absolute;left:891px;top:682px;" width="15" height="15" viewBox="0 0 15 15"><path d="M7.5 2 V13 M2 7.5 H13" stroke="#8e8e8e" stroke-width="1"/></svg>
<div style="position:absolute;left:962px;top:686px;width:2px;height:2px;background:#222;"></div>
<div style="position:absolute;left:962px;top:690px;width:2px;height:2px;background:#222;"></div>
<div style="position:absolute;left:962px;top:694px;width:2px;height:2px;background:#222;"></div>
<div style="position:absolute;left:979px;top:681px;width:601px;height:17px;background:#f6f6f6;border-radius:9px;"></div>
<svg style="position:absolute;left:983px;top:684px;" width="9" height="11" viewBox="0 0 9 11"><path d="M1 5.5 L7.5 1 V10 Z" fill="#707070"/></svg>
<div style="position:absolute;left:996px;top:685px;width:289px;height:9px;background:#707070;border-radius:5px;"></div>
<svg style="position:absolute;left:1567px;top:683px;" width="10" height="12" viewBox="0 0 10 12"><path d="M9 6 L2 1.5 V10.5 Z" fill="#707070"/></svg>
<div style="position:absolute;left:1px;top:706px;width:1597px;height:22px;background:#f3f3f3;border-top:1px solid #fff;box-sizing:border-box;"></div>
<div class="t" style="left:12.50px;top:713px;font-size:11px;color:#242424;transform:scaleX(0.9594);transform-origin:0 0;">Ready</div>
<svg style="position:absolute;left:62px;top:710px;" width="16" height="15" viewBox="0 0 16 15">
<path d="M6 12.5 H1.6 V1.6 H14.4 V6" fill="none" stroke="#1f1f1f" stroke-width="1.2"/>
<path d="M1.6 3.6 H14.4" stroke="#1f1f1f" stroke-width="1"/>
<path d="M3.3 5.5 H5.9 M3.3 7.5 H5.9 M3.3 9.4 H5.9" stroke="#1f1f1f" stroke-width="1"/>
<circle cx="10.5" cy="9.4" r="3.9" fill="#f3f3f3" stroke="#1f1f1f" stroke-width="1.2"/>
<rect x="9.1" y="8" width="2.8" height="2.8" rx="0.6" fill="#1f1f1f"/></svg>
<svg style="position:absolute;left:94px;top:709px;" width="17" height="16" viewBox="0 0 17 16">
<circle cx="7" cy="3.2" r="1.9" fill="none" stroke="#222" stroke-width="1.1"/>
<path d="M4.9 4.4 L1.9 4 Q0.9 4.6 1.5 5.4 L4.1 6.3 Q3.6 9 3.2 12.6 Q3.4 14.8 5.2 14.6" fill="none" stroke="#222" stroke-width="1.1"/>
<path d="M9.1 4.4 L12.1 4 Q13.1 4.6 12.5 5.4 L9.7 6.5 L9.4 9.1" fill="none" stroke="#222" stroke-width="1.1"/>
<path d="M7.6 11.3 L10.4 14.6 L15.7 9.1" fill="none" stroke="#222" stroke-width="1.1"/></svg>
<svg style="position:absolute;left:1169px;top:710px;" width="16" height="15" viewBox="0 0 16 15">
<path d="M1.5 1.5 H14.5 V7 M1.5 1.5 V10.5 H6" fill="none" stroke="#222" stroke-width="1.1"/>
<circle cx="10.5" cy="10.5" r="2.3" fill="none" stroke="#222" stroke-width="1.1"/>
<path d="M10.5 6.5 V8 M10.5 13 V14.5 M6.5 10.5 H8 M13 10.5 H14.5 M7.8 7.8 L8.7 8.7 M12.3 12.3 L13.2 13.2 M7.8 13.2 L8.7 12.3 M12.3 8.7 L13.2 7.8" stroke="#222" stroke-width="1"/></svg>
<div class="t" style="left:1187.50px;top:713px;font-size:11px;color:#242424;transform:scaleX(1.0207);transform-origin:0 0;">Display Settings</div>
<div style="position:absolute;left:1288px;top:707px;width:40px;height:20px;background:#dcdcdc;"></div>
<svg style="position:absolute;left:1300px;top:709px;" width="15" height="15" viewBox="0 0 15 15"><path d="M1.5 1.5 H13.5 V13.5 H1.5 Z M1.5 5.5 H13.5 M1.5 9.5 H13.5 M5.5 1.5 V13.5 M9.5 1.5 V13.5" fill="none" stroke="#222" stroke-width="1.2"/></svg>
<svg style="position:absolute;left:1340px;top:709px;" width="16" height="15" viewBox="0 0 16 15"><rect x="1.8" y="1.8" width="12.7" height="12.2" fill="none" stroke="#1f1f1f" stroke-width="1.3"/><rect x="4.8" y="3.7" width="6.8" height="8" fill="none" stroke="#1f1f1f" stroke-width="1.1"/><path d="M6.3 5.6 H10.2 M6.3 7.5 H10.2 M6.3 9.4 H10.2" stroke="#1f1f1f" stroke-width="0.9"/></svg>
<svg style="position:absolute;left:1380px;top:709px;" width="16" height="15" viewBox="0 0 16 15"><path d="M1.8 1.8 H14.5 V14 H1.8 Z M5.2 1.8 V8.4 H9.3 V1.8" fill="none" stroke="#bdbdbd" stroke-width="1.1"/></svg>
<div style="position:absolute;left:1414px;top:716px;width:8px;height:1.2px;background:#444;"></div>
<div style="position:absolute;left:1427px;top:717px;width:100px;height:1px;background:#777;"></div>
<div style="position:absolute;left:1475px;top:712px;width:5px;height:11px;background:#555;"></div>
<svg style="position:absolute;left:1531px;top:712px;" width="10" height="10" viewBox="0 0 10 10"><path d="M4.9 1 V9 M0.9 5 H8.9" stroke="#444" stroke-width="1.1"/></svg>
<div class="t" style="left:1554.00px;top:712px;font-size:12px;color:#242424;transform:scaleX(0.8398);transform-origin:0 0;">100%</div>
</div></div></body></html>
